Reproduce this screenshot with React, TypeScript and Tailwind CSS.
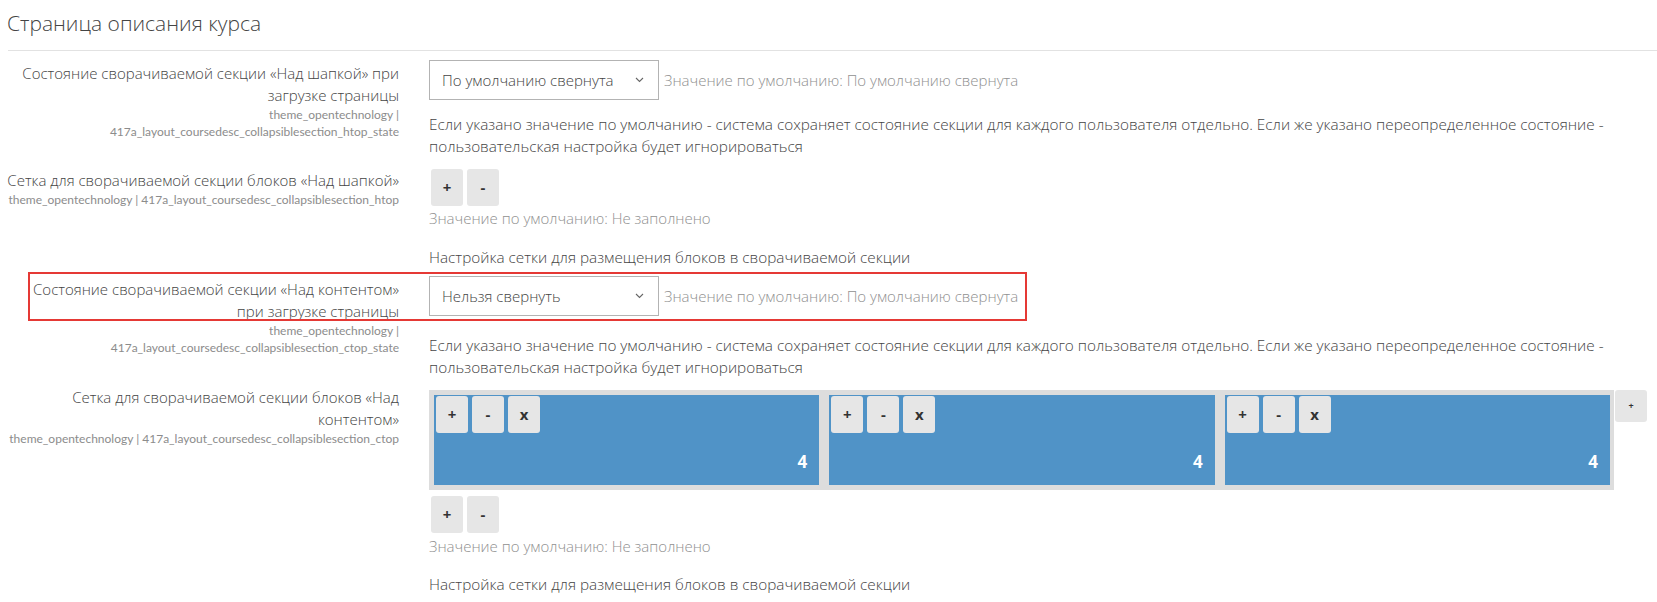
import React from "react";

const sans = "font-['Open_Sans',sans-serif] font-light";

function Label({ lines, code }: { lines: string[]; code: string[] }) {
  return (
    <div className="w-[399px] shrink-0 text-right">
      <div className="text-[15px] leading-[22px] text-[#444]">
        {lines.map((l, i) => (
          <div key={i} className="whitespace-nowrap">
            {l}
          </div>
        ))}
      </div>
      <div className="font-['Lato',sans-serif] text-[12px] font-normal leading-[17px] text-[#8c8c8c]">
        {code.map((l, i) => (
          <div key={i} className="whitespace-nowrap">
            {l}
          </div>
        ))}
      </div>
    </div>
  );
}

function Select({ value }: { value: string }) {
  return (
    <div className="flex h-[40px] w-[230px] items-center justify-between border border-[#b3b3b3] bg-white pl-[12px] pr-[14px] text-[15px] text-[#444]">
      <span>{value}</span>
      <svg width="9" height="6" viewBox="0 0 9 6" fill="none">
        <path d="M1 1l3.5 3.5L8 1" stroke="#666" strokeWidth="1.1" />
      </svg>
    </div>
  );
}

function Btn({ children }: { children: React.ReactNode }) {
  return (
    <div className="flex h-[37px] w-[32px] items-center justify-center rounded-[3px] bg-[#e6e6e6] text-[15px] font-bold text-[#333]">
      {children}
    </div>
  );
}

function Description({ children, className }: { children: React.ReactNode; className?: string }) {
  return <div className={"text-[15.3px] leading-[22px] text-[#444] " + (className ?? "")}>{children}</div>;
}

function DefaultNote({ children, className }: { children: React.ReactNode; className?: string }) {
  return <div className={"text-[15px] leading-[22px] text-[#909090] " + (className ?? "")}>{children}</div>;
}

const longDesc =
  "Если указано значение по умолчанию - система сохраняет состояние секции для каждого пользователя отдельно. Если же указано переопределенное состояние - пользовательская настройка будет игнорироваться";

function Block() {
  return (
    <div className="flex h-[90px] flex-1 flex-col justify-between bg-[#5093c7] pb-[13px] pl-[2px] pr-[12px] pt-[1px]">
      <div className="flex gap-[4px]">
        <Btn>+</Btn>
        <Btn>-</Btn>
        <Btn>x</Btn>
      </div>
      <div className="text-right text-[17px] font-bold leading-[20px] text-white">4</div>
    </div>
  );
}

export default function App() {
  return (
    <div className={`h-[602px] w-[1657px] overflow-hidden bg-white ${sans}`}>
      <div className="h-[50px] pl-[7px] pt-[10px] text-[21px] leading-[26px] text-[#444]">
        Страница описания курса
      </div>
      <div className="ml-[8px] h-px bg-[#e2e2e2]" />

      {/* row 1 */}
      <div className="mt-[9px] flex">
        <div className="pt-[2px]">
          <Label
            lines={["Состояние сворачиваемой секции «Над шапкой» при", "загрузке страницы"]}
            code={["theme_opentechnology |", "417a_layout_coursedesc_collapsiblesection_htop_state"]}
          />
        </div>
        <div className="ml-[30px] flex-1 pr-[40px]">
          <div className="flex items-center gap-[5px]">
            <Select value="По умолчанию свернута" />
            <DefaultNote>Значение по умолчанию: По умолчанию свернута</DefaultNote>
          </div>
          <Description className="mt-[13px]">{longDesc}</Description>
        </div>
      </div>

      {/* row 2 */}
      <div className="mt-[12px] flex">
        <Label
          lines={["Сетка для сворачиваемой секции блоков «Над шапкой»"]}
          code={["theme_opentechnology | 417a_layout_coursedesc_collapsiblesection_htop"]}
        />
        <div className="ml-[30px] flex-1">
          <div className="flex gap-[4px] pl-[2px]">
            <Btn>+</Btn>
            <Btn>-</Btn>
          </div>
          <DefaultNote className="mt-[1px]">Значение по умолчанию: Не заполнено</DefaultNote>
          <Description className="mt-[17px]">Настройка сетки для размещения блоков в сворачиваемой секции</Description>
        </div>
      </div>

      {/* row 3 */}
      <div className="relative mt-[8px] flex">
        <div className="pt-[2px]">
          <Label
            lines={["Состояние сворачиваемой секции «Над контентом»", "при загрузке страницы"]}
            code={["theme_opentechnology |", "417a_layout_coursedesc_collapsiblesection_ctop_state"]}
          />
        </div>
        <div className="ml-[30px] flex-1 pr-[40px]">
          <div className="flex items-center gap-[5px]">
            <Select value="Нельзя свернуть" />
            <DefaultNote>Значение по умолчанию: По умолчанию свернута</DefaultNote>
          </div>
          <Description className="mt-[18px]">{longDesc}</Description>
        </div>
        <div className="pointer-events-none absolute left-[28px] top-[-4px] h-[49px] w-[999px] border-2 border-[#e53935]" />
      </div>

      {/* row 4 */}
      <div className="mt-[8px] flex">
        <Label
          lines={["Сетка для сворачиваемой секции блоков «Над", "контентом»"]}
          code={["theme_opentechnology | 417a_layout_coursedesc_collapsiblesection_ctop"]}
        />
        <div className="ml-[30px] flex-1 pt-[4px]">
          <div className="flex items-start">
            <div className="flex w-[1185px] gap-[10px] bg-[#dddddd] py-[5px] pl-[5px] pr-[4px]">
              <Block />
              <Block />
              <Block />
            </div>
            <div className="ml-[1px] flex h-[32px] w-[32px] items-center justify-center rounded-[3px] bg-[#e6e6e6] text-[9px] font-bold text-[#333]">
              +
            </div>
          </div>
          <div className="mt-[6px] flex gap-[4px] pl-[2px]">
            <Btn>+</Btn>
            <Btn>-</Btn>
          </div>
          <DefaultNote className="mt-[2px]">Значение по умолчанию: Не заполнено</DefaultNote>
          <Description className="mt-[16px]">Настройка сетки для размещения блоков в сворачиваемой секции</Description>
        </div>
      </div>
    </div>
  );
}
